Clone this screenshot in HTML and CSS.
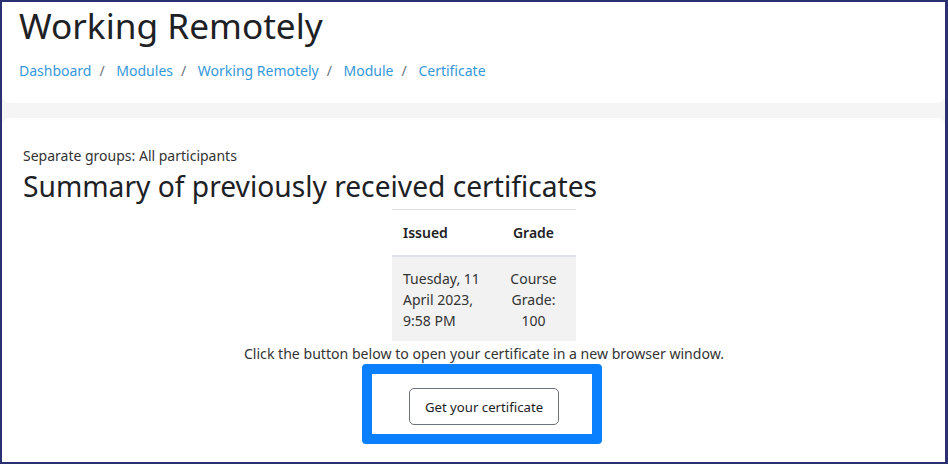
FILE: index.html
```html
<!DOCTYPE html>
<html lang="en">
<head>
<meta charset="utf-8">
<title>Certificate</title>
<link rel="stylesheet" href="styles.css">
</head>
<body>
<div class="frame">
  <header class="card header-card">
    <h1 class="page-title">Working Remotely</h1>
    <nav class="breadcrumb">
      <a href="#">Dashboard</a><span class="sep">/</span>
      <a href="#">Modules</a><span class="sep">/</span>
      <a href="#">Working Remotely</a><span class="sep">/</span>
      <a href="#">Module</a><span class="sep">/</span>
      <a href="#">Certificate</a>
    </nav>
  </header>
  <main class="card main-card">
    <div class="groups">Separate groups: All participants</div>
    <h2 class="summary-title">Summary of previously received certificates</h2>
    <table class="cert-table">
      <colgroup><col class="c1"><col class="c2"></colgroup>
      <thead>
        <tr><th class="issued">Issued</th><th class="grade">Grade</th></tr>
      </thead>
      <tbody>
        <tr><td class="issued">Tuesday, 11<br>April 2023,<br>9:58 PM</td><td class="grade">Course<br>Grade:<br>100</td></tr>
      </tbody>
    </table>
    <p class="hint">Click the button below to open your certificate in a new browser window.</p>
    <div class="highlight">
      <button class="btn" type="button">Get your certificate</button>
    </div>
  </main>
</div>
</body>
</html>
```

FILE: styles.css
```css
html, body {
  margin: 0;
  padding: 0;
}
body {
  width: 948px;
  height: 464px;
  overflow: hidden;
  font-family: "Noto Sans", "Open Sans", sans-serif;
  color: #1d2125;
}
.frame {
  box-sizing: border-box;
  width: 948px;
  height: 464px;
  border: 2px solid #2b3170;
  border-right-width: 3px;
  background: #f5f5f5;
  display: flex;
  flex-direction: column;
  gap: 15px;
}
.card {
  background: #fff;
}
.header-card {
  height: 101px;
  box-sizing: border-box;
  padding: 3px 17px 0;
  border-radius: 0 0 8px 8px;
}
.page-title {
  margin: 0;
  font-size: 35.2px;
  font-weight: 400;
  line-height: 41px;
  color: #1d2125;
}
.breadcrumb {
  margin-top: 15px;
  font-size: 14px;
  line-height: 20px;
}
.breadcrumb a {
  color: #3598db;
  text-decoration: none;
}
.breadcrumb .sep {
  color: #6a737b;
  padding: 0 8px;
}
.main-card {
  flex: 1;
  border-radius: 8px 8px 0 0;
  padding: 28px 0 0 21px;
  display: flex;
  flex-direction: column;
}
.groups {
  font-size: 14px;
  line-height: 19px;
  color: #333;
}
.summary-title {
  margin: 3px 0 5px;
  font-size: 28.2px;
  font-weight: 400;
  line-height: 36px;
}
.cert-table {
  align-self: center;
  border-collapse: collapse;
  table-layout: fixed;
  width: 184px;
  font-size: 14px;
  line-height: 21px;
  color: #333;
}
.cert-table col.c1 { width: 99px; }
.cert-table col.c2 { width: 85px; }
.cert-table th {
  font-weight: 600;
  color: #1d2125;
  padding: 12px 11px;
  border-top: 1px solid #dee2e6;
  border-bottom: 2px solid #dee2e6;
}
.cert-table td {
  background: #f2f2f2;
  padding: 11px 11px 10px;
}
.cert-table .issued { text-align: left; }
.cert-table .grade { text-align: center; }
.hint {
  margin: 2px 0 0;
  text-align: center;
  font-size: 14.1px;
  line-height: 21px;
  color: #333;
}
.highlight {
  align-self: center;
  margin-top: 0;
  margin-right: 4px;
  box-sizing: border-box;
  width: 240px;
  height: 80px;
  border: 10px solid #0a80ff;
  border-radius: 4px;
  display: flex;
  justify-content: center;
  padding: 14px 0 0 4px;
}
.btn {
  box-sizing: border-box;
  width: 150px;
  height: 37px;
  border: 1px solid #6a737b;
  border-radius: 5px;
  background: #fff;
  font-family: "Noto Sans", "Open Sans", sans-serif;
  font-size: 13.2px;
  color: #1d2125;
  padding: 0;
}
```
